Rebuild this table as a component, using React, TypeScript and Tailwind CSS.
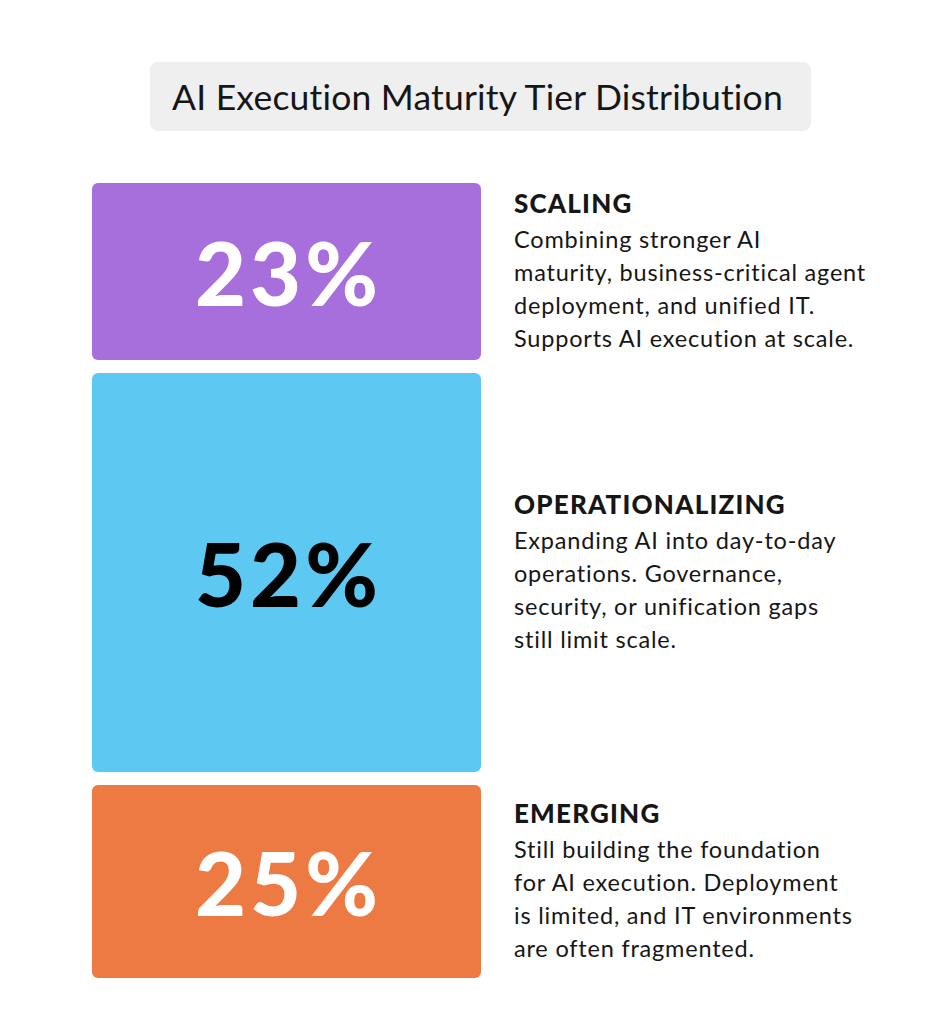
const tiers = [
  {
    pct: "23%",
    box: "bg-[#a66fdb] text-white h-[177px]",
    title: "SCALING",
    lines: [
      "Combining stronger AI",
      "maturity, business-critical agent",
      "deployment, and unified IT.",
      "Supports AI execution at scale.",
    ],
  },
  {
    pct: "52%",
    box: "bg-[#5dc9f3] text-black h-[399px]",
    title: "OPERATIONALIZING",
    lines: [
      "Expanding AI into day-to-day",
      "operations. Governance,",
      "security, or unification gaps",
      "still limit scale.",
    ],
  },
  {
    pct: "25%",
    box: "bg-[#ee7a43] text-white h-[193px]",
    title: "EMERGING",
    lines: [
      "Still building the foundation",
      "for AI execution. Deployment",
      "is limited, and IT environments",
      "are often fragmented.",
    ],
  },
];

export default function App() {
  return (
    <div className="w-[946px] h-[1024px] bg-white font-['Lato',sans-serif] text-[#161616] pl-[92px] pt-[62px]">
      <div className="ml-[58px] w-[661px] h-[69px] rounded-lg bg-[#efefef] flex items-center pl-[22px]">
        <h1 className="text-[35.5px] leading-none tracking-[0.2px]">
          AI Execution Maturity Tier Distribution
        </h1>
      </div>

      <div className="mt-[52px] flex flex-col gap-[13px]">
        {tiers.map((t) => (
          <div key={t.title} className="flex items-center gap-[33px]">
            <div
              className={`w-[389px] rounded-md flex items-center justify-center shrink-0 ${t.box}`}
            >
              <span className="text-[88px] font-black leading-none tracking-[4px] pl-[4px]">
                {t.pct}
              </span>
            </div>
            <div className="flex flex-col">
              <h2 className="text-[26px] font-black leading-[28px] tracking-[1.2px]">
                {t.title}
              </h2>
              <p className="text-[23.5px] leading-[33px] tracking-[0.8px] mt-[6px]">
                {t.lines.map((l) => (
                  <span key={l} className="block whitespace-nowrap">
                    {l}
                  </span>
                ))}
              </p>
            </div>
          </div>
        ))}
      </div>
    </div>
  );
}
